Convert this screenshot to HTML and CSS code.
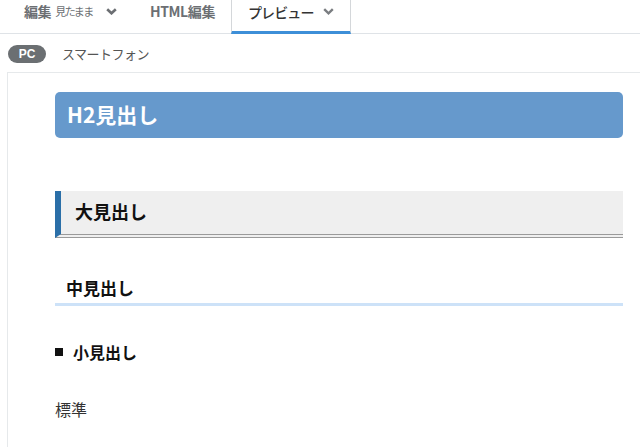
FILE: index.html
```html
<!DOCTYPE html>
<html lang="ja">
<head>
<meta charset="utf-8">
<link rel="stylesheet" href="styles.css">
</head>
<body>
<div class="tabs">
  <div class="tab tab-edit"><span class="t-main">編集</span><span class="t-sub">見たまま</span><svg class="chev" width="11" height="7" viewBox="0 0 11 7"><polyline points="1.2,1.2 5.5,5.3 9.8,1.2" fill="none" stroke="#6c6f73" stroke-width="2.6"/></svg></div>
  <div class="tab tab-html"><span class="t-main">HTML編集</span></div>
  <div class="tab tab-preview"><span class="t-prev">プレビュー</span><svg class="chev" width="11" height="7" viewBox="0 0 11 7"><polyline points="1.2,1.2 5.5,5.3 9.8,1.2" fill="none" stroke="#7a7d81" stroke-width="2.4"/></svg></div>
</div>
<div class="devices">
  <span class="pill">PC</span>
  <span class="dev">スマートフォン</span>
</div>
<div class="frame">
  <div class="content">
    <h2 class="h2">H2見出し</h2>
    <h3 class="large">大見出し</h3>
    <h4 class="middle">中見出し</h4>
    <h5 class="small"><span class="sq"></span>小見出し</h5>
    <p class="normal">標準</p>
  </div>
</div>
</body>
</html>
```
FILE: styles.css
```css
* { box-sizing: border-box; }
html, body { margin: 0; padding: 0; background: #fff; }
body {
  font-family: "Noto Sans CJK JP", "Noto Sans", "Liberation Sans", sans-serif;
  width: 640px;
  height: 447px;
  overflow: hidden;
}
.tabs {
  display: flex;
  height: 34px;
  border-bottom: 1px solid #dfe3e7;
}
.tab {
  display: flex;
  align-items: center;
  height: 33px;
  padding-bottom: 13px;
  padding-top: 2px;
}
.tab-edit { padding-left: 24px; width: 150px; }
.t-main { font-size: 14px; font-weight: 700; color: #6c6f73; letter-spacing: -0.4px; }
.t-sub { font-size: 11px; color: #6c6f73; margin-left: 4px; letter-spacing: -1.5px; }
.tab-edit .chev { margin-left: 13px; }
.tab-html { width: 81px; }
.tab-preview {
  width: 120px;
  padding-left: 16px;
  border-left: 1px solid #d4d7da;
  border-right: 1px solid #d4d7da;
  border-bottom: 3px solid #3d8fd8;
  height: 34px;
  padding-bottom: 10px;
}
.t-prev { font-size: 14px; font-weight: 500; color: #333; letter-spacing: -0.9px; }
.tab-preview .chev { margin-left: 9px; }
.devices {
  display: flex;
  align-items: center;
  height: 38px;
  padding-left: 8px;
  padding-top: 1px;
}
.pill {
  display: inline-flex;
  align-items: center;
  justify-content: center;
  width: 38px;
  height: 18px;
  border-radius: 9px;
  background: #6b6f72;
  color: #fff;
  font-size: 12px;
  font-weight: 700;
  font-family: "Liberation Sans", sans-serif;
}
.dev { margin-left: 16px; font-size: 13px; color: #555; letter-spacing: -0.5px; }
.frame {
  margin-left: 7px;
  border-top: 1px solid #e6e9eb;
  border-left: 1px solid #e6e9eb;
  height: 380px;
}
.content {
  padding: 19px 17px 0 47px;
}
.h2 {
  margin: 0;
  height: 46px;
  line-height: 45px;
  padding-left: 12px;
  background: #6699cc;
  border-radius: 5px;
  color: #fff;
  font-size: 21px;
  font-weight: 700;
}
.large {
  margin: 53px 0 0;
  height: 47px;
  padding-left: 14px;
  line-height: 41px;
  background: #efefef;
  border-left: 6px solid #2b6fa8;
  border-bottom: 4px double #9a9a9a;
  font-size: 18px;
  font-weight: 700;
  color: #111;
}
.middle {
  margin: 32px 0 0;
  padding: 5px 11px 3px;
  line-height: 25px;
  border-bottom: 3px solid #cde2f8;
  font-size: 17px;
  font-weight: 700;
  color: #111;
}
.small {
  display: flex;
  align-items: center;
  margin: 34px 0 0;
  line-height: 24px;
  font-size: 16px;
  font-weight: 700;
  color: #111;
}
.sq {
  display: inline-block;
  width: 8px;
  height: 8px;
  background: #111;
  margin-right: 10px;
}
.normal {
  margin: 33px 0 0;
  line-height: 24px;
  font-size: 16px;
  color: #333;
}
```
